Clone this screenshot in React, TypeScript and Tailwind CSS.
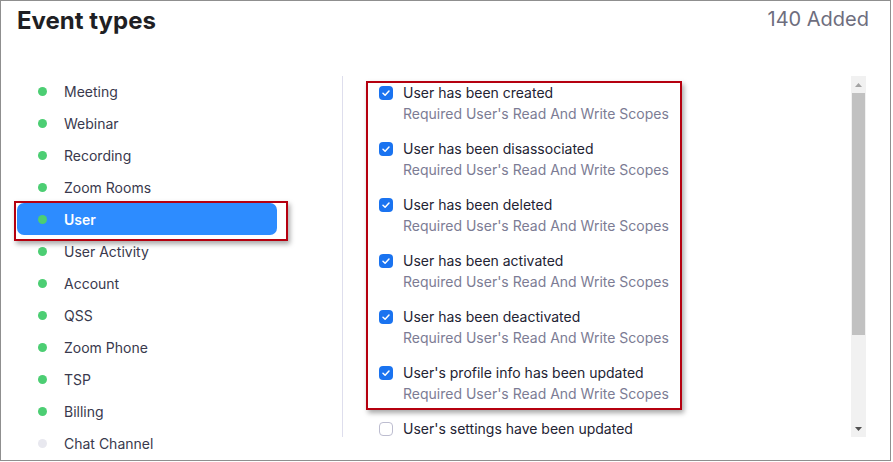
import React from "react";

const cats: { name: string; on: boolean }[] = [
  { name: "Meeting", on: true },
  { name: "Webinar", on: true },
  { name: "Recording", on: true },
  { name: "Zoom Rooms", on: true },
  { name: "User", on: true },
  { name: "User Activity", on: true },
  { name: "Account", on: true },
  { name: "QSS", on: true },
  { name: "Zoom Phone", on: true },
  { name: "TSP", on: true },
  { name: "Billing", on: true },
  { name: "Chat Channel", on: false },
];

const events: { title: string; checked: boolean; sub: boolean }[] = [
  { title: "User has been created", checked: true, sub: true },
  { title: "User has been disassociated", checked: true, sub: true },
  { title: "User has been deleted", checked: true, sub: true },
  { title: "User has been activated", checked: true, sub: true },
  { title: "User has been deactivated", checked: true, sub: true },
  { title: "User's profile info has been updated", checked: true, sub: true },
  { title: "User's settings have been updated", checked: false, sub: false },
];

function Check({ checked }: { checked: boolean }) {
  if (checked) {
    return (
      <span className="w-[14px] h-[14px] rounded-[4px] bg-[#1a73f0] flex items-center justify-center shrink-0">
        <svg width="10" height="10" viewBox="0 0 10 10" fill="none">
          <path d="M2 5.2 L4.1 7.2 L8 3" stroke="white" strokeWidth="1.5" strokeLinecap="round" strokeLinejoin="round" />
        </svg>
      </span>
    );
  }
  return <span className="w-[14px] h-[14px] rounded-[4px] border border-[#bdbdd0] bg-white shrink-0" />;
}

export default function App() {
  return (
    <div className="w-[893px] h-[462px] bg-white relative" style={{ fontFamily: "Inter, 'Noto Sans', sans-serif" }}>
      <div className="w-[891px] h-[461px] border border-[#8f8f8f] overflow-hidden flex flex-col">
        <div className="h-[75px] flex justify-between items-start pl-[16px] pr-[21px] shrink-0">
          <div className="text-[24px] leading-[32px] font-bold text-[#1f1f24] mt-[4px]">Event types</div>
          <div className="text-[20px] leading-[32px] text-[#6e6e7e] mt-[2px]">140 Added</div>
        </div>
        <div className="flex">
          <div className="w-[341px] pl-[16px] shrink-0 -mt-px">
            {cats.map((c) => {
              const sel = c.name === "User";
              return (
                <div
                  key={c.name}
                  className={
                    "h-8 w-[260px] flex items-center rounded-[7px] text-[14px] " +
                    (sel ? "bg-[#2d8cff] text-white font-semibold" : "text-[#39394d]")
                  }
                >
                  <span
                    className={
                      "w-[9px] h-[9px] rounded-full ml-[21px] mr-[17px] " +
                      (c.on ? "bg-[#4cce73]" : "bg-[#e8e8ef]")
                    }
                  />
                  {c.name}
                </div>
              );
            })}
          </div>
          <div className="h-[361px] border-l border-[#dedeed] flex">
            <div className="w-[508px] pl-[36px] pt-[6px] overflow-hidden">
              {events.map((e) => (
                <div key={e.title} className="mb-[14px]">
                  <div className="h-[21px] flex items-center gap-[10px] text-[14px] text-[#232333]">
                    <Check checked={e.checked} />
                    <span>{e.title}</span>
                  </div>
                  {e.sub && (
                    <div className="h-[21px] leading-[21px] pl-[24px] text-[14px] text-[#7c7c94]">
                      Required User's Read And Write Scopes
                    </div>
                  )}
                </div>
              ))}
            </div>
            <div className="w-[15px] h-[361px] bg-[#f1f1f1] flex flex-col items-center">
              <div className="h-[17px] flex items-center justify-center">
                <svg width="7" height="4" viewBox="0 0 7 4"><path d="M0 4 L3.5 0 L7 4 Z" fill="#a3a3a3" /></svg>
              </div>
              <div className="w-[13px] h-[242px] bg-[#c1c1c1]" />
              <div className="flex-1" />
              <div className="h-[17px] flex items-center justify-center">
                <svg width="7" height="4" viewBox="0 0 7 4"><path d="M0 0 L7 0 L3.5 4 Z" fill="#505050" /></svg>
              </div>
            </div>
          </div>
        </div>
      </div>
      <div className="absolute left-[14px] top-[201px] w-[274px] h-[40px] border-2 border-[#b5000f] shadow-[2px_3px_5px_rgba(0,0,0,0.35)]" />
      <div className="absolute left-[366px] top-[81px] w-[316px] h-[329px] border-2 border-[#b5000f] shadow-[2px_3px_5px_rgba(0,0,0,0.35)]" />
    </div>
  );
}
